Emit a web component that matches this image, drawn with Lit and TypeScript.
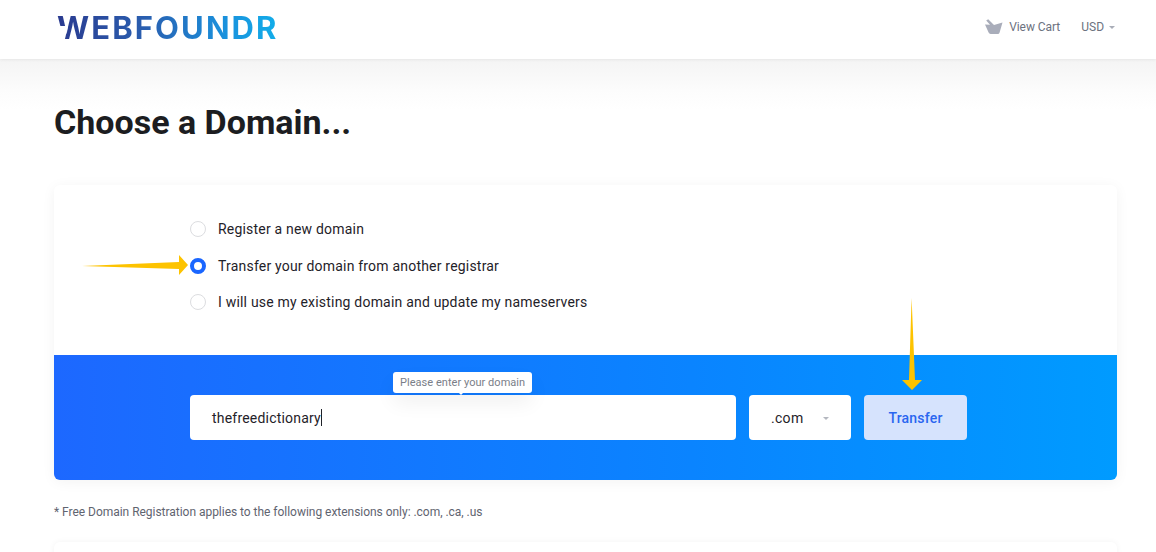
import { LitElement, html, css, svg } from "lit";
import { customElement } from "lit/decorators.js";

@customElement("app-root")
export class AppRoot extends LitElement {
  static styles = css`
    :host { display: block; width: 1156px; height: 552px; overflow: hidden; position: relative;
      font-family: Roboto, "Liberation Sans", sans-serif; color: #1f2229;
      background: linear-gradient(180deg, #f4f4f4 59px, #fcfcfc 90px, #fff 110px); }
    header { height: 59px; background: #fff; box-shadow: 0 1px 3px rgba(0,0,0,.06); display: flex; align-items: center; justify-content: space-between; padding: 0 41px 0 57px; box-sizing: border-box; }
    .logo { position: relative; font: 700 31px/1 Inter, sans-serif; letter-spacing: 2.1px; background: linear-gradient(90deg, #2a3a8f 0%, #2a5fb0 40%, #1a90dc 75%, #12aeea 100%); -webkit-background-clip: text; background-clip: text; color: transparent; transform: translateY(-2px); }
    .logo::after { content: ""; position: absolute; left: 0; top: 14px; width: 12px; height: 15px; background: #fff; clip-path: polygon(0 0, 11px 0, 7.5px 100%, 0 100%); }
    .nav { display: flex; align-items: center; font-size: 12px; color: #6c7280; transform: translateY(-3px); }
    .nav svg { display: block; }
    .cart { width: 18px; height: 15px; margin-right: 6px; }
    .vc { letter-spacing: -.05px; }
    .usd { margin-left: 21px; }
    .caret { width: 0; height: 0; border: 3px solid transparent; border-top: 3px solid #a9adb8; border-bottom: 0; margin-left: 5px; margin-top: 1px; }
    main { padding: 43px 39px 0 54px; }
    h1 { margin: 0 0 42px; font-size: 34px; line-height: 41px; font-weight: 700; color: #1c1d21; }
    .card { background: #fff; border-radius: 6px; box-shadow: 0 2px 14px rgba(0,0,0,.05); overflow: hidden; }
    .opts { height: 170px; box-sizing: border-box; padding: 34px 136px 0; display: flex; flex-direction: column; gap: 16.5px; font-size: 14px; line-height: 20px; letter-spacing: .2px; }
    .opt { display: flex; align-items: center; gap: 12px; }
    .radio { width: 16px; height: 16px; border-radius: 50%; box-sizing: border-box; border: 1.5px solid #dcdde0; background: #fff; }
    .radio.on { border: 4.5px solid #1a66ff; }
    .bar { height: 125px; box-sizing: border-box; padding: 40px 136px 0; background: linear-gradient(90deg, #1d68ff 0%, #0a84ff 60%, #009bff 100%); display: flex; align-items: flex-start; gap: 13px; }
    .input { position: relative; width: 546px; height: 45px; background: #fff; border-radius: 4px; display: flex; align-items: center; padding-left: 22px; box-sizing: border-box; font-size: 14px; letter-spacing: .2px; }
    .cursor { width: 1px; height: 17px; background: #1f2229; }
    .tip { position: absolute; left: 203px; top: -23px; height: 21px; padding: 0 7px; background: #fff; border-radius: 3px; font-size: 11px; line-height: 21px; color: #7a7e88; letter-spacing: .04px; box-shadow: 0 10px 20px rgba(0,0,0,.06); white-space: nowrap; }
    .tip::after { content: ""; position: absolute; left: 66px; bottom: -2px; border: 2px solid transparent; border-top: 2px solid #fff; border-bottom: 0; }
    .select { width: 102px; height: 45px; background: #fff; border-radius: 4px; display: flex; align-items: center; padding-left: 22px; box-sizing: border-box; font-size: 14px; letter-spacing: .3px; position: relative; }
    .select .caret { margin-left: 20px; border-top-color: #b4b7bf; }
    .btn { width: 103px; height: 45px; background: #d6e3fd; border-radius: 4px; display: flex; align-items: center; justify-content: center; font-size: 14px; font-weight: 500; color: #2a66f0; letter-spacing: .2px; }
    .note { margin: 24px 0 0; font-size: 12px; line-height: 16px; color: #5f6470; letter-spacing: -.03px; }
    .next { height: 40px; margin-top: 22px; background: #fff; border-radius: 6px; box-shadow: 0 0 6px rgba(0,0,0,.05); }
    .arrow { position: absolute; pointer-events: none; overflow: visible; }
    .a1 { left: 82px; top: 255px; width: 106px; height: 20px; }
    .a2 { left: 902px; top: 298px; width: 20px; height: 92px; }
  `;

  private opt(label: string, on = false) {
    return html`<div class="opt"><span class="radio ${on ? "on" : ""}"></span><span>${label}</span></div>`;
  }

  render() {
    return html`
      <header>
        <div class="logo">WEBFOUNDR</div>
        <div class="nav">
          <svg class="cart" viewBox="0 0 18 15"><path d="M0 5.5 L5 5.8 L1.2 1.6 L3.2 .2 L9 6 L17.5 3.6 L14.6 13.4 Q14.2 15 12.8 15 H5.6 Q4.2 15 3.6 13.6 Z" fill="#a9adba"/></svg>
          <span class="vc">View Cart</span>
          <span class="usd">USD</span><span class="caret"></span>
        </div>
      </header>
      <main>
        <h1>Choose a Domain...</h1>
        <div class="card">
          <div class="opts">
            ${this.opt("Register a new domain")}
            ${this.opt("Transfer your domain from another registrar", true)}
            ${this.opt("I will use my existing domain and update my nameservers")}
          </div>
          <div class="bar">
            <div class="input">thefreedictionary<span class="cursor"></span>
              <div class="tip">Please enter your domain</div>
            </div>
            <div class="select">.com<span class="caret"></span></div>
            <div class="btn">Transfer</div>
          </div>
        </div>
        <p class="note">* Free Domain Registration applies to the following extensions only: .com, .ca, .us</p>
        <div class="next"></div>
      </main>
      <svg class="arrow a1" viewBox="0 0 106 20">${svg`<path d="M0 11 L97 7 L97 0 L106 10 L97 20 L97 14 Z" fill="#fdc300"/>`}</svg>
      <svg class="arrow a2" viewBox="0 0 20 92">${svg`<path d="M9.6 0 L13 82 L20 82 L10 92 L0 82 L7 82 Z" fill="#fdc300"/>`}</svg>
    `;
  }
}
